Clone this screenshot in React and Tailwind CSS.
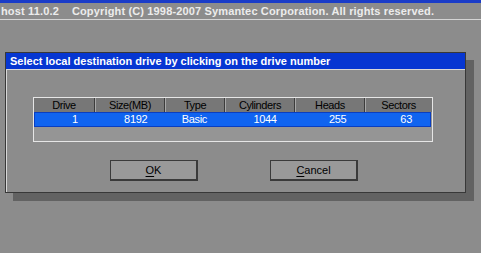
import React from 'react';

const columns = [
  { label: 'Drive', width: 'w-[61px]', value: '1' },
  { label: 'Size(MB)', width: 'w-[70px]', value: '8192' },
  { label: 'Type', width: 'w-[60px]', value: 'Basic' },
  { label: 'Cylinders', width: 'w-[70px]', value: '1044' },
  { label: 'Heads', width: 'w-[70px]', value: '255' },
  { label: 'Sectors', width: 'w-[66px]', value: '63' },
];

const DosButton = ({ hotkey, rest }) => (
  <button
    type="button"
    className="w-[88px] h-[21px] bg-[#999999] border border-[#3a3a3a] border-r-2 border-b-2 flex items-center justify-center text-[11px] text-black leading-none"
  >
    <span className="underline underline-offset-2">{hotkey}</span>
    {rest}
  </button>
);

export default function App() {
  return (
    <div
      className="w-[481px] h-[253px] bg-[#8c8c8c] overflow-hidden flex flex-col"
      style={{ fontFamily: '"Liberation Sans", Arial, sans-serif' }}
    >
      {/* top banner */}
      <div className="h-[3px] bg-[#1a3cc8]" />
      <div className="h-[16px] flex items-center text-[11px] font-bold text-[#ececec] tracking-[0.15px] whitespace-nowrap">
        <span className="ml-[1px]">host 11.0.2</span>
        <span className="ml-[13px]">Copyright (C) 1998-2007 Symantec Corporation. All rights reserved.</span>
      </div>
      <div className="h-[1px] bg-[#d4d4d4]" />

      {/* dialog */}
      <div className="ml-[5px] mt-[32px] w-[461px] h-[141px] border border-[#383838] bg-[#8c8c8c] shadow-[8px_8px_0_#626262] flex flex-col">
        <div className="h-[16px] bg-[#0636d2] flex items-center pl-[4px] text-[11px] font-bold text-white tracking-[0px] whitespace-nowrap">
          Select local destination drive by clicking on the drive number
        </div>
        <div className="flex-1 border-l border-t border-[#d8d8d8] flex flex-col">
          {/* drive table */}
          <div className="ml-[26px] mt-[27px] w-[400px] h-[45px] border border-[#e6e6e6] bg-[#959595] flex flex-col">
            <div className="h-[14px] bg-[#777777] flex">
              {columns.map((c, i) => (
                <div
                  key={c.label}
                  className={`${c.width} h-full flex items-center justify-center text-[11px] text-black tracking-[-0.4px] ${i > 0 ? 'border-l border-l-[#a8a8a8]' : ''} ${i < columns.length - 1 ? 'border-r border-r-[#3c3c3c]' : ''}`}
                >
                  {c.label}
                </div>
              ))}
            </div>
            <div className="h-[15px] mr-[1px] bg-[#1064f0] border border-[#0a3ec0] flex">
              {columns.map((c) => (
                <div
                  key={c.label}
                  className={`${c.width} h-full flex items-center justify-end pr-[18px] text-[11px] text-white tracking-[-0.3px]`}
                >
                  {c.value}
                </div>
              ))}
            </div>
          </div>

          {/* buttons */}
          <div className="ml-[103px] mt-[18px] flex gap-[72px]">
            <DosButton hotkey="O" rest="K" />
            <DosButton hotkey="C" rest="ancel" />
          </div>
        </div>
      </div>
    </div>
  );
}
